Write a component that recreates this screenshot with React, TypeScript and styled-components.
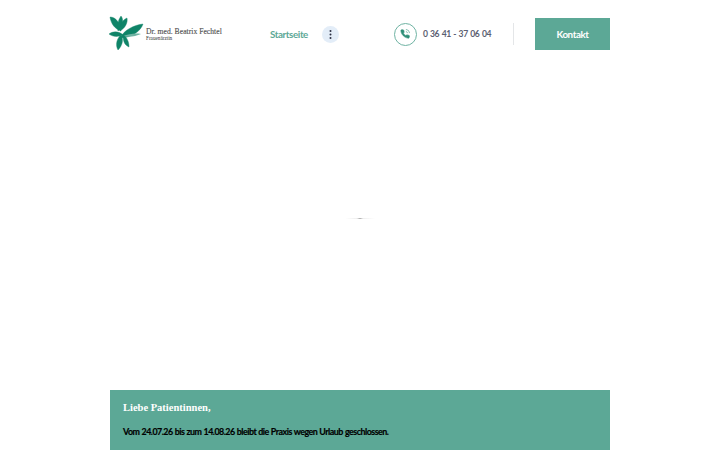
import React from 'react';
import styled, { createGlobalStyle } from 'styled-components';

const GlobalStyle = createGlobalStyle`
html, body {
  margin: 0;
  height: 100%;
  background: #fff;
  overflow: hidden;
}
#root {
  height: 100%;
}
`;

const Page = styled.div`
height: 450px;
width: 500px;
margin: 0 auto;
display: flex;
flex-direction: column;
font-family: Lato, sans-serif;
`;

const Header = styled.header`
display: flex;
align-items: center;
padding-top: 18px;
height: 32px;
`;

const Brand = styled.a`
display: flex;
align-items: center;
width: 161px;
margin-left: -1px;
`;

const BrandText = styled.div`
display: flex;
flex-direction: column;
margin-left: 1px;
font-family: "Liberation Serif", serif;
color: #555;
`;

const BrandName = styled.span`
font-size: 7.6px;
line-height: 7px;
letter-spacing: 0.04px;
-webkit-text-stroke: 0.15px #555;
white-space: nowrap;
`;

const BrandRole = styled.span`
font-size: 5.2px;
line-height: 6px;
color: #333;
`;

const NavLink = styled.a`
font-size: 9.8px;
font-weight: 700;
letter-spacing: -0.4px;
color: #5ca896;
white-space: nowrap;
`;

const MoreButton = styled.button`
width: 17px;
height: 17px;
margin-left: 14px;
padding: 0;
border: 0;
border-radius: 50%;
background: #e3edf8;
display: flex;
align-items: center;
justify-content: center;
`;

const Phone = styled.div`
display: flex;
align-items: center;
margin-left: 55px;
`;

const PhoneRing = styled.div`
width: 21px;
height: 21px;
border: 1px solid #6fb3a3;
border-radius: 50%;
display: flex;
align-items: center;
justify-content: center;
`;

const PhoneNumber = styled.span`
margin-left: 6px;
font-size: 8.6px;
font-weight: 700;
letter-spacing: -0.4px;
word-spacing: 0.8px;
color: #5c5f72;
white-space: nowrap;
`;

const Divider = styled.div`
width: 1px;
height: 22px;
margin-left: 22px;
background: #e4e6e8;
`;

const ContactButton = styled.a`
width: 75px;
height: 32px;
margin-left: auto;
background: #5ca896;
color: #fff;
font-size: 9.8px;
font-weight: 700;
letter-spacing: -0.4px;
display: flex;
align-items: center;
justify-content: center;
`;

const Main = styled.main`
flex: 1;
display: flex;
align-items: center;
justify-content: center;
padding-bottom: 3px;
`;

const Loader = styled.div`
width: 30px;
height: 1px;
background: linear-gradient(90deg, #fff, #eee 40%, #aaa 50%, #eee 60%, #fff);
`;

const Notice = styled.section`
height: 60px;
padding: 11px 13px 0;
box-sizing: border-box;
background: #5ca896;
`;

const NoticeTitle = styled.h2`
margin: 0;
font-family: "Liberation Serif", serif;
font-size: 10.5px;
line-height: 14px;
font-weight: 700;
color: #fff;
`;

const NoticeBody = styled.p`
margin: 10px 0 0;
font-size: 8.9px;
line-height: 13px;
font-weight: 700;
letter-spacing: -0.5px;
word-spacing: 0.4px;
-webkit-text-stroke: 0.15px #000;
color: #000;
white-space: nowrap;
`;

const Logo = () => (
  <svg width="36" height="36" viewBox="3 3 36 36" fill="#0f8468" stroke="#0f8468" strokeWidth="0.4">
    <path d="M4 4c6 0 10 6 11 14-6-2-10-7-11-14z" />
    <path d="M15 3c3 4 2 10-3 15-1-6 0-11 3-15z" />
    <path d="M21 5c1 5-2 10-7 13 0-6 2-11 7-13z" />
    <path d="M37 11c-2 7-12 14-23 14 4-8 14-13 23-14z" />
    <path d="M3 21c4-3 10-3 14 1-5 2-10 2-14-1z" />
    <path d="M35 21c-5 2-12 4-18 2 6-2 12-3 18-2z" fill="#6fb3a3" stroke="none" />
    <path d="M12 37c-3-5-1-12 3-15 3 5 1 11-3 15z" />
    <path d="M23 34c-5-2-6-7-6-12 4 2 6 7 6 12z" />
  </svg>
);

const Dots = () => (
  <svg width="3" height="9" viewBox="0 0 3 9" fill="#2b2f42">
    <circle cx="1.5" cy="1" r="1" />
    <circle cx="1.5" cy="4.5" r="1" />
    <circle cx="1.5" cy="8" r="1" />
  </svg>
);

const PhoneIcon = () => (
  <svg width="10" height="10" viewBox="0 0 24 24" fill="#2f8f78" stroke="#2f8f78" strokeWidth="1.6" strokeLinecap="round" strokeLinejoin="round">
    <path d="M22 16.9v3a2 2 0 0 1-2.2 2 19.8 19.8 0 0 1-8.6-3.1 19.5 19.5 0 0 1-6-6A19.8 19.8 0 0 1 2.1 4.2 2 2 0 0 1 4.1 2h3a2 2 0 0 1 2 1.7c.1 1 .4 1.9.7 2.8a2 2 0 0 1-.5 2.1L8.1 9.9a16 16 0 0 0 6 6l1.3-1.3a2 2 0 0 1 2.1-.4c.9.3 1.8.6 2.8.7a2 2 0 0 1 1.7 2z" />
    <path d="M15 6a4 4 0 0 1 3 3" fill="none" stroke="#6fb3a3" strokeWidth="2" />
    <path d="M15 1a9 9 0 0 1 8 8" fill="none" stroke="#6fb3a3" strokeWidth="2" />
  </svg>
);

const App = () => (
  <>
    <GlobalStyle />
    <Page>
      <Header>
        <Brand>
          <Logo />
          <BrandText>
            <BrandName>Dr. med. Beatrix Fechtel</BrandName>
            <BrandRole>Frauenärztin</BrandRole>
          </BrandText>
        </Brand>
        <NavLink>Startseite</NavLink>
        <MoreButton aria-label="Mehr">
          <Dots />
        </MoreButton>
        <Phone>
          <PhoneRing>
            <PhoneIcon />
          </PhoneRing>
          <PhoneNumber>0 36 41 - 37 06 04</PhoneNumber>
        </Phone>
        <Divider />
        <ContactButton>Kontakt</ContactButton>
      </Header>
      <Main>
        <Loader />
      </Main>
      <Notice>
        <NoticeTitle>Liebe Patientinnen,</NoticeTitle>
        <NoticeBody>Vom 24.07.26 bis zum 14.08.26 bleibt die Praxis wegen Urlaub geschlossen.</NoticeBody>
      </Notice>
    </Page>
  </>
);

export default App;
